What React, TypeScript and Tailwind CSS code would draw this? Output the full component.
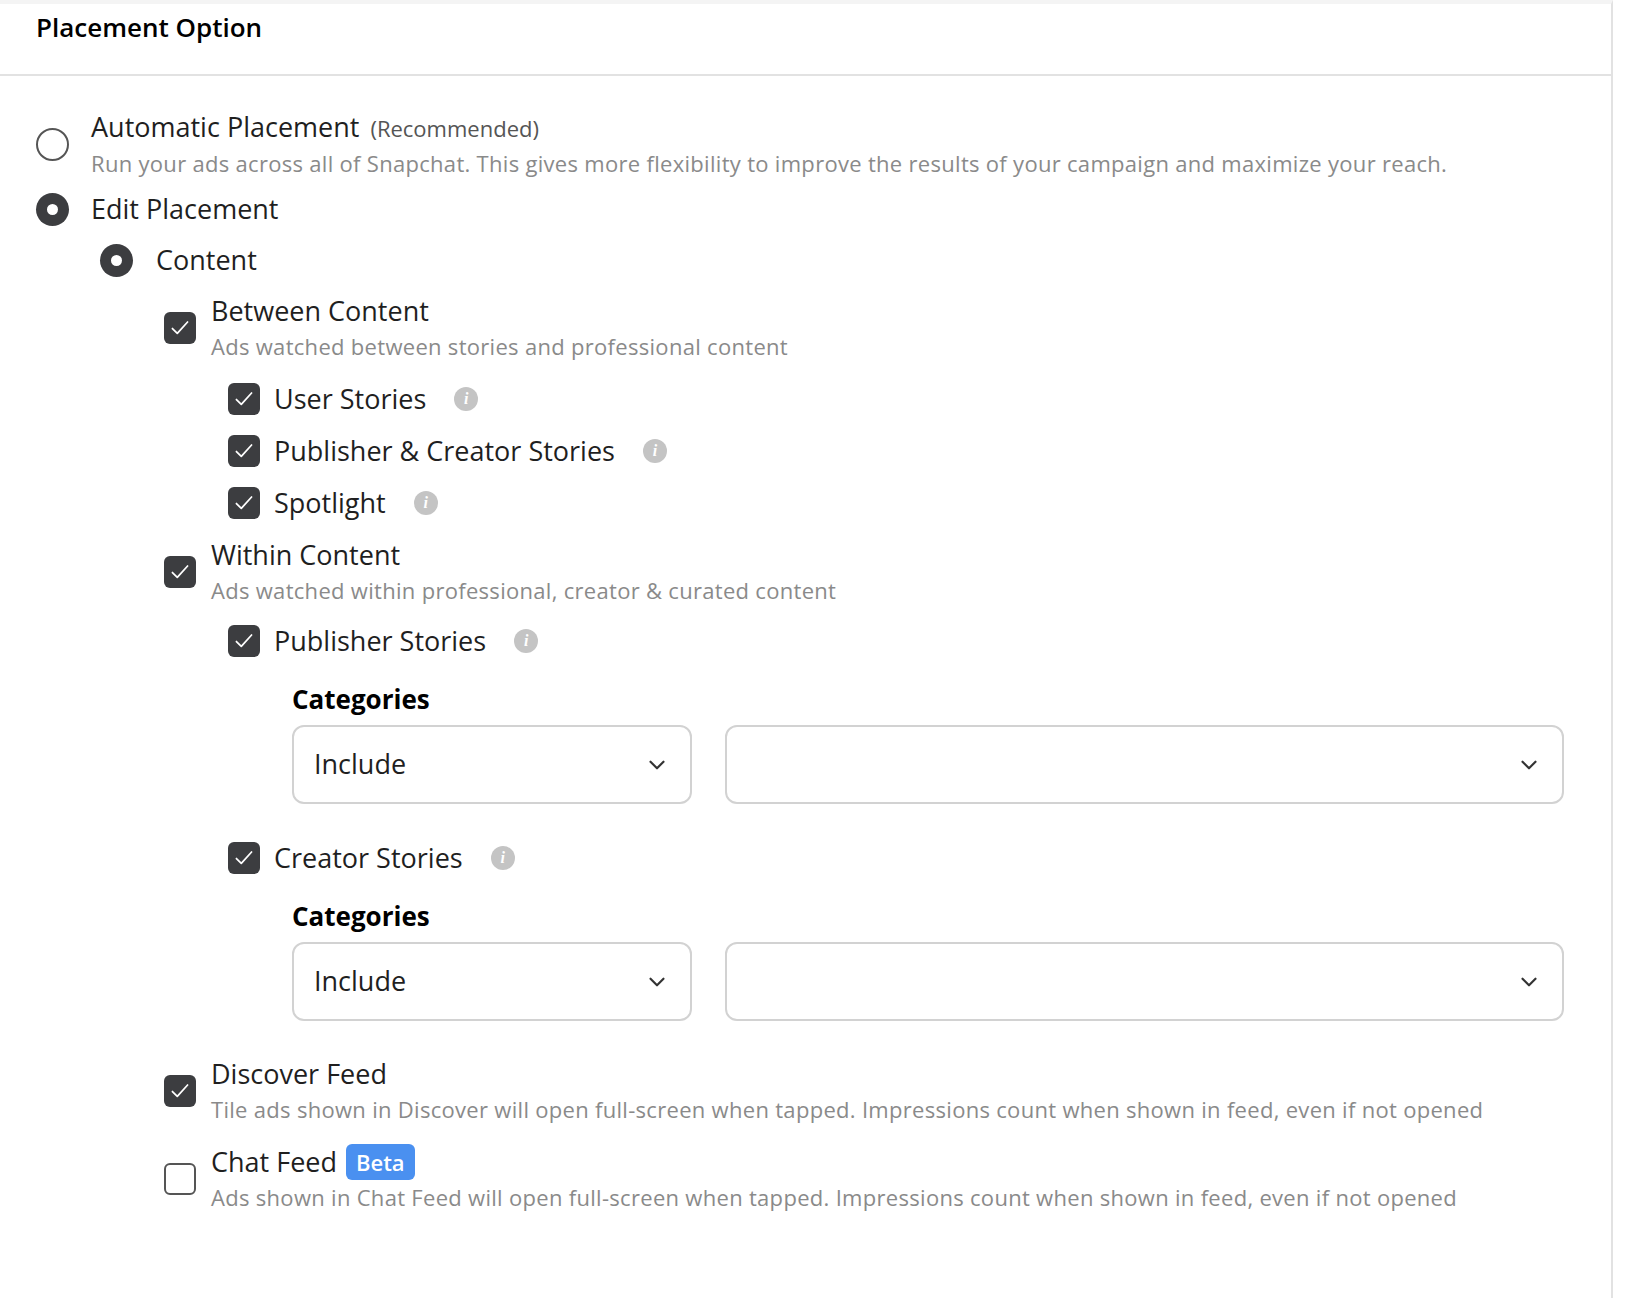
import { ChevronDown } from 'lucide-react';

function Radio({ on }: { on?: boolean }) {
    return on ? (
        <span className="w-[33px] h-[33px] rounded-full bg-[#3c3d40] flex items-center justify-center shrink-0">
            <span className="w-[11px] h-[11px] rounded-full bg-white" />
        </span>
    ) : (
        <span className="w-[33px] h-[33px] rounded-full border-2 border-[#555] bg-white shrink-0" />
    );
}

function Check({ on }: { on?: boolean }) {
    return on ? (
        <span className="w-[32px] h-[32px] rounded-[6px] bg-[#3c3d40] flex items-center justify-center shrink-0">
            <svg viewBox="0 0 24 24" className="w-[26px] h-[26px]" fill="none" stroke="white" strokeWidth="1.6" strokeLinecap="round" strokeLinejoin="round">
                <path d="M5 12.5l4.5 4.5L19 6.5" />
            </svg>
        </span>
    ) : (
        <span className="w-[32px] h-[32px] rounded-[6px] border-2 border-[#555] bg-white shrink-0" />
    );
}

function Info() {
    return (
        <span className="w-[24px] h-[24px] rounded-full bg-[#c4c4c4] flex items-center justify-center text-white text-[16px] italic font-bold ml-7 shrink-0" style={{ fontFamily: 'Liberation Serif, serif' }}>i</span>
    );
}

function SubCheck({ label }: { label: string }) {
    return (
        <div className="flex items-center h-[52px]">
            <Check on />
            <span className="ml-[14px] text-[27px] text-[#1f1f1f]">{label}</span>
            <Info />
        </div>
    );
}

function Categories() {
    return (
        <div className="ml-[64px] mt-3 mb-2">
            <div className="text-[26px] font-bold text-black h-[40px] leading-[40px]">Categories</div>
            <div className="flex gap-[33px] mt-[6px]">
                <div className="w-[400px] h-[79px] shrink-0 border-2 border-[#d2d2d2] rounded-[12px] flex items-center justify-between px-[20px]">
                    <span className="text-[27px] text-[#1f1f1f]">Include</span>
                    <ChevronDown className="w-[26px] h-[26px] text-[#333]" strokeWidth={2} />
                </div>
                <div className="w-[839px] h-[79px] shrink-0 border-2 border-[#d2d2d2] rounded-[12px] flex items-center justify-end px-[20px]">
                    <ChevronDown className="w-[26px] h-[26px] text-[#333]" strokeWidth={2} />
                </div>
            </div>
        </div>
    );
}

function Group({ title, desc, on, children }: { title: React.ReactNode; desc: string; on?: boolean; children?: React.ReactNode }) {
    return (
        <div>
            <div className="flex items-center gap-[15px]">
                <Check on={on} />
                <div>
                    <div className="text-[27px] text-[#1f1f1f] leading-[36px] flex items-center">{title}</div>
                    <div className="text-[22px] text-[#8a8a8a] leading-[34px] tracking-[0.3px]">{desc}</div>
                </div>
            </div>
            {children}
        </div>
    );
}

export default function App() {
    return (
        <div className="w-[1638px] h-[1298px] bg-white overflow-hidden" style={{ fontFamily: '"Open Sans", Lato, sans-serif' }}>
            <div className="w-[1613px] h-full border-r-2 border-[#e2e2e2] border-t-4 border-t-[#f4f4f4]">
                {/* Header */}
                <div className="h-[72px] border-b-2 border-[#e2e2e2] px-[36px] pt-[4px]">
                    <h2 className="text-[26px] font-semibold text-black">Placement Option</h2>
                </div>

                <div className="pl-[36px] pr-[60px] pt-[33px]">
                    {/* Automatic */}
                    <div className="flex items-center gap-[22px]">
                        <Radio />
                        <div>
                            <div className="text-[27px] text-[#1f1f1f] leading-[36px]">
                                Automatic Placement <span className="text-[22px] text-[#555] ml-1">(Recommended)</span>
                            </div>
                            <div className="text-[22px] text-[#8a8a8a] leading-[34px] tracking-[0.3px]">
                                Run your ads across all of Snapchat. This gives more flexibility to improve the results of your campaign and maximize your reach.
                            </div>
                        </div>
                    </div>

                    {/* Edit */}
                    <div className="flex items-center gap-[22px] h-[50px] mt-[4px]">
                        <Radio on />
                        <span className="text-[27px] text-[#1f1f1f]">Edit Placement</span>
                    </div>

                    <div className="ml-[64px]">
                        <div className="flex items-center gap-[23px] h-[52px]">
                            <Radio on />
                            <span className="text-[27px] text-[#1f1f1f]">Content</span>
                        </div>

                        <div className="ml-[64px] mt-[7px] flex flex-col">
                            <Group title="Between Content" desc="Ads watched between stories and professional content" on>
                                <div className="ml-[64px] mt-[10px] mb-[8px]">
                                    <SubCheck label="User Stories" />
                                    <SubCheck label="Publisher & Creator Stories" />
                                    <SubCheck label="Spotlight" />
                                </div>
                            </Group>

                            <Group title="Within Content" desc="Ads watched within professional, creator & curated content" on>
                                <div className="ml-[64px] mt-[8px]">
                                    <SubCheck label="Publisher Stories" />
                                    <Categories />
                                    <div className="mt-[28px]">
                                        <SubCheck label="Creator Stories" />
                                    </div>
                                    <Categories />
                                </div>
                            </Group>

                            <div className="mt-[27px]">
                                <Group title="Discover Feed" desc="Tile ads shown in Discover will open full-screen when tapped. Impressions count when shown in feed, even if not opened" on />
                            </div>
                            <div className="mt-[18px]">
                                <Group
                                    title={<>Chat Feed <span className="ml-[9px] bg-[#4a90f0] text-white text-[22px] rounded-[6px] px-[10px] leading-[36px] font-semibold">Beta</span></>}
                                    desc="Ads shown in Chat Feed will open full-screen when tapped. Impressions count when shown in feed, even if not opened"
                                />
                            </div>
                        </div>
                    </div>
                </div>
            </div>
        </div>
    );
}
